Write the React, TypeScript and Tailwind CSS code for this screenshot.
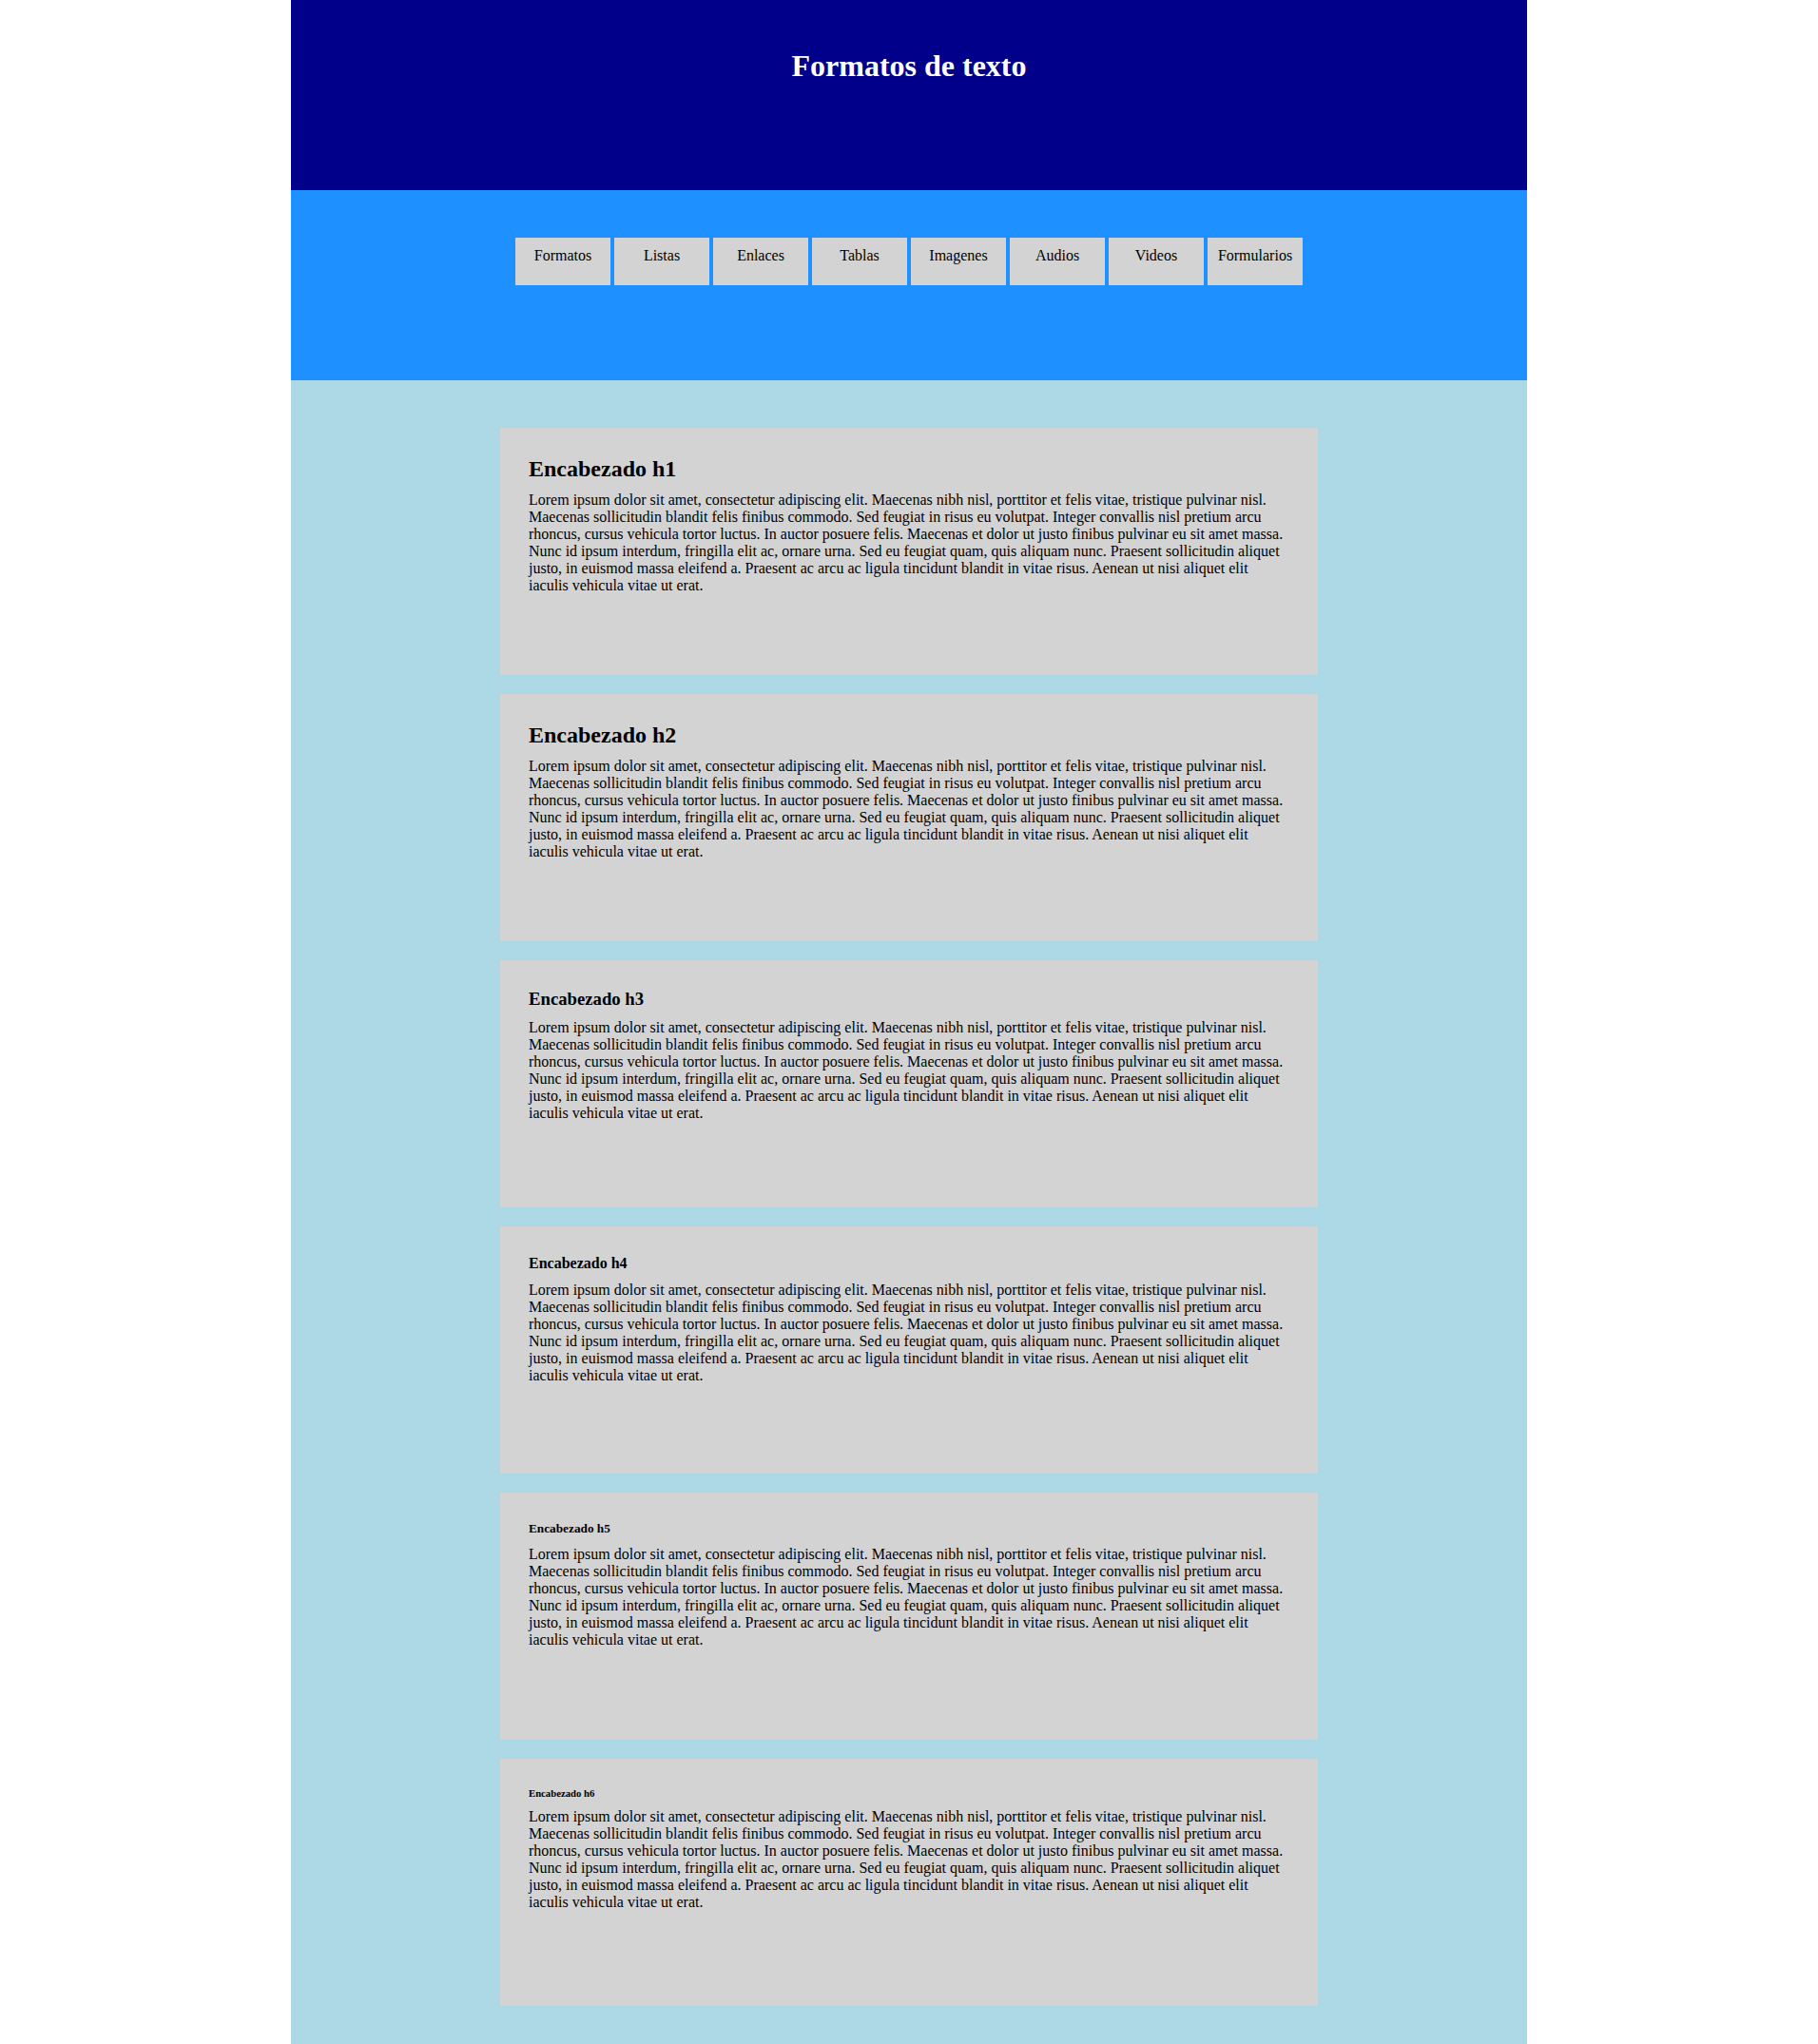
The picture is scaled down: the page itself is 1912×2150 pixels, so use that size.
const navItems = [
  'Formatos',
  'Listas',
  'Enlaces',
  'Tablas',
  'Imagenes',
  'Audios',
  'Videos',
  'Formularios',
];

const lorem =
  'Lorem ipsum dolor sit amet, consectetur adipiscing elit. Maecenas nibh nisl, porttitor et felis vitae, tristique pulvinar nisl. Maecenas sollicitudin blandit felis finibus commodo. Sed feugiat in risus eu volutpat. Integer convallis nisl pretium arcu rhoncus, cursus vehicula tortor luctus. In auctor posuere felis. Maecenas et dolor ut justo finibus pulvinar eu sit amet massa. Nunc id ipsum interdum, fringilla elit ac, ornare urna. Sed eu feugiat quam, quis aliquam nunc. Praesent sollicitudin aliquet justo, in euismod massa eleifend a. Praesent ac arcu ac ligula tincidunt blandit in vitae risus. Aenean ut nisi aliquet elit iaculis vehicula vitae ut erat.';

const sections = [
  { id: 'h1', title: 'Encabezado h1', size: 'text-[24px]' },
  { id: 'h2', title: 'Encabezado h2', size: 'text-[24px]' },
  { id: 'h3', title: 'Encabezado h3', size: 'text-[18.72px]' },
  { id: 'h4', title: 'Encabezado h4', size: 'text-[16px]' },
  { id: 'h5', title: 'Encabezado h5', size: 'text-[13.28px]' },
  { id: 'h6', title: 'Encabezado h6', size: 'text-[10.72px]' },
];

export default function App() {
  return (
    <div className="min-h-screen bg-white font-['Liberation_Serif','Times_New_Roman',serif] text-black leading-[normal]">
      <div className="mx-auto w-[1300px]">
        {/* Header */}
        <header className="h-[200px] bg-[#00008b] pt-[51px] text-center">
          <h1 className="text-[32px] font-bold text-white leading-[normal]">Formatos de texto</h1>
        </header>

        {/* Nav */}
        <nav className="h-[200px] bg-[#1e90ff] pt-[50px]">
          <ul className="flex justify-center gap-[4px]">
            {navItems.map((item) => (
              <li
                key={item}
                className="h-[50px] w-[100px] bg-[#d3d3d3] pt-[10px] text-center text-[16px]"
              >
                {item}
              </li>
            ))}
          </ul>
        </nav>

        {/* Content */}
        <main className="flex flex-col items-center gap-[20px] bg-[#add8e6] pt-[50px] pb-[50px]">
          {sections.map((s) => (
            <section
              key={s.id}
              className="h-[260px] w-[860px] bg-[#d3d3d3] px-[30px] pt-[30px]"
            >
              <h2 className={`${s.size} mb-[10px] font-bold leading-[normal]`}>{s.title}</h2>
              <p className="text-[16px] leading-[normal]">{lorem}</p>
            </section>
          ))}
        </main>
      </div>
    </div>
  );
}
